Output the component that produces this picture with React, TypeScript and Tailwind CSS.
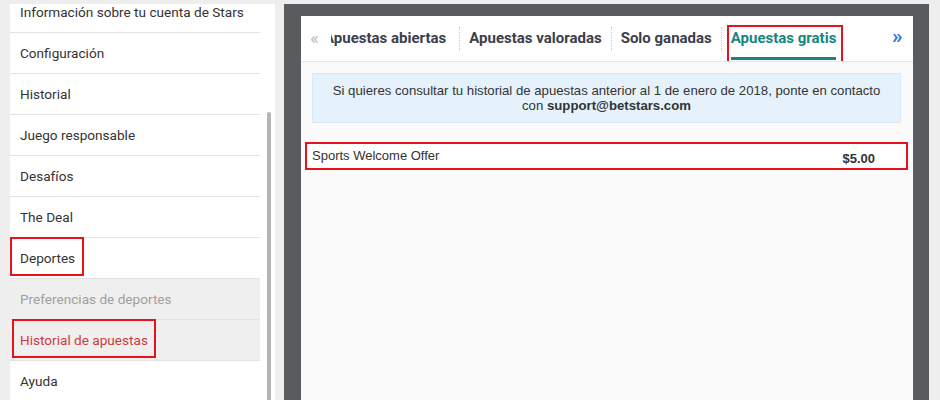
import React from "react";

const items = [
  { label: "Información sobre tu cuenta de Stars" },
  { label: "Configuración" },
  { label: "Historial" },
  { label: "Juego responsable" },
  { label: "Desafíos" },
  { label: "The Deal" },
  { label: "Deportes", box: "w-[74px]" },
  { label: "Preferencias de deportes", sub: true },
  { label: "Historial de apuestas", sub: true, active: true, box: "w-[144px] left-[2px]" },
  { label: "Ayuda" },
];

function Sidebar() {
  return (
    <div className="ml-[10px] w-[265px] shrink-0 bg-white flex overflow-hidden">
      <div className="w-[250px] -mt-[12px] flex flex-col">
        {items.map((it) => (
          <div
            key={it.label}
            className={`relative h-[41px] shrink-0 border-b border-[#e3e3e3] flex items-center pl-[10px] text-[13.6px] ${
              it.sub ? "bg-[#efefef]" : "bg-white"
            } ${it.active ? "text-[#d0393e]" : it.sub ? "text-[#a0a0a0]" : "text-[#333333]"}`}
          >
            {it.label}
            {it.box && (
              <div className={`absolute top-[-1px] bottom-[2px] left-0 border-2 border-[#e8121c] ${it.box}`} />
            )}
          </div>
        ))}
      </div>
      <div className="w-[15px] flex justify-center pt-[108px] pl-[2px]">
        <div className="w-[4px] h-full bg-[#b5b5b5] rounded-t-sm" />
      </div>
    </div>
  );
}

function Tabs() {
  return (
    <div className="h-[46px] shrink-0 bg-white border-b border-[#e6e6e6] flex items-center text-[15px] font-bold">
      <span className="w-[30px] shrink-0 pl-[9px] text-[#bdbdbd] font-normal text-[19px] leading-none -mt-[3px]">«</span>
      <div className="flex-1 flex items-center h-full overflow-hidden">
        <div className="flex items-center h-full -ml-[7px] shrink-0">
          <div className="pr-[13px] text-[#3b404a]">Apuestas abiertas</div>
          <div className="px-[9px] h-[24px] flex items-center border-l border-dotted border-[#c8c8c8] text-[#3b404a]">
            Apuestas valoradas
          </div>
          <div className="px-[9px] h-[24px] flex items-center border-l border-dotted border-[#c8c8c8] text-[#3b404a]">
            Solo ganadas
          </div>
          <div className="relative h-[24px] flex items-center border-l border-dotted border-[#c8c8c8] pl-[9px] pr-[7px]">
            <span className="relative text-[#16877f]">
              Apuestas gratis
              <span className="absolute left-0 right-0 -bottom-[10px] h-[3px] bg-[#16877f]" />
            </span>
            <div className="absolute left-[5px] right-0 -top-[2px] -bottom-[12px] border-2 border-[#e8121c]" />
          </div>
        </div>
      </div>
      <span className="w-[21px] shrink-0 text-[#2a7fd4] text-[21px] leading-none -mt-[4px]">»</span>
    </div>
  );
}

export default function App() {
  return (
    <div className="w-[940px] h-[400px] overflow-hidden bg-[#eeeeee] flex pt-[4px] font-['Roboto',sans-serif]">
      <Sidebar />
      <div className="ml-[9px] w-[645px] shrink-0 bg-[#5a5b5c] pt-[12px] pl-[17px] pr-[16px] flex">
        <div className="flex-1 bg-[#fafafa] flex flex-col">
          <Tabs />
          <div className="font-['Liberation_Sans',Arial,sans-serif] text-[13.2px] text-[#333333]">
            <div className="mt-[11px] ml-[11px] mr-[12px] h-[50px] bg-[#e6f2fb] border border-[#d8e8f4] flex flex-col items-center justify-center leading-[15px] text-center">
              <p>Si quieres consultar tu historial de apuestas anterior al 1 de enero de 2018, ponte en contacto</p>
              <p>
                con <b>support@betstars.com</b>
              </p>
            </div>
            <div className="mt-[19px] ml-[4px] mr-[5px] h-[28px] border-2 border-[#e8121c] flex text-[13px]">
              <div className="flex-1 pl-[5px] pt-[2px] bg-white">Sports Welcome Offer</div>
              <div className="pr-[31px] pt-[5px] font-bold bg-white">$5.00</div>
            </div>
          </div>
        </div>
      </div>
    </div>
  );
}
